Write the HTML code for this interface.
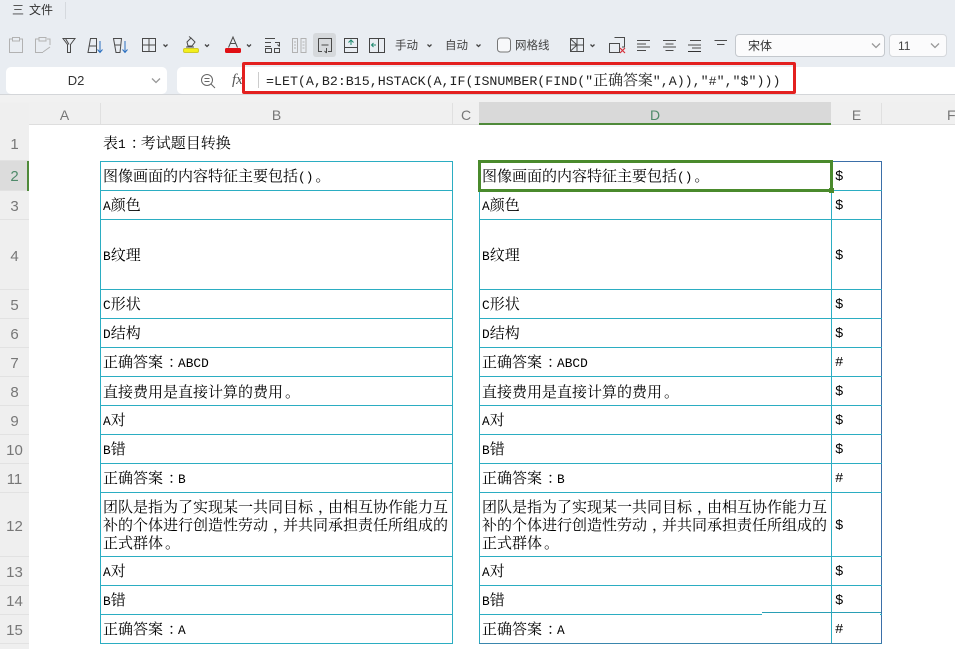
<!DOCTYPE html>
<html>
<head>
<meta charset="utf-8">
<style>
html,body{margin:0;padding:0}
body{width:955px;height:649px;overflow:hidden;position:relative;background:#fff;font-family:"Liberation Sans","Noto Sans CJK SC",sans-serif;color:#333}
.a{position:absolute}
.ui{font-size:11.5px;color:#444;line-height:14px;white-space:nowrap}
.ch,.rh{position:absolute;color:#777;text-align:center;font-size:14px}
.ch{top:103px;height:21px;line-height:24px;border-right:1px solid #e0e0e0;box-sizing:border-box}
.rh{left:0;width:29px;background:#efefef;box-sizing:border-box;border-bottom:1px solid #e2e2e2;font-size:15px}
table{position:absolute;border-collapse:collapse;table-layout:fixed;font-family:"Noto Serif CJK SC","Liberation Serif",serif;font-size:15px;color:#000;line-height:18px}
td{border:1px solid #2badc2;padding:1px 0 0 2px;overflow:hidden;vertical-align:middle;box-sizing:border-box;white-space:nowrap}
i{font-family:"Liberation Mono",monospace;font-style:normal;font-size:12.8px}
b{font-weight:normal;position:relative;left:5px}
u{text-decoration:none;position:relative;left:2px}
td.l{padding-left:2px}
td.e{padding:2px 0 0 3px;border-right:1px solid #3b6fa8;font-family:"Liberation Mono",monospace;font-size:14px}
td.t{padding-top:3px}
tr.top td.e{border-top-color:#3b6fa8}
tr.end td{border-bottom-color:#3a86ad}
svg{position:absolute;overflow:visible}
.s{fill:none;stroke:#4a4a4a;stroke-width:1}
.c{fill:none;stroke:#444;stroke-width:1.3}
.g{fill:none;stroke:#b2b2b2;stroke-width:1}
</style>
</head>
<body>
<div class="a" style="left:0;top:0;width:955px;height:103px;background:#e9edf2"></div>

<div class="a ui" style="left:12px;top:3px;font-size:12px">三</div>
<div class="a ui" style="left:29px;top:3px;font-size:12px;color:#333">文件</div>
<div class="a" style="left:65px;top:2px;width:1px;height:17px;background:#d5d9de"></div>

<div class="a" style="left:313px;top:33px;width:23px;height:24px;background:#d6d9dc;border-radius:3px"></div>

<svg class="a" style="left:0;top:0" width="955" height="62" viewBox="0 0 955 62">
  <path class="g" d="M12 39H9.500V52.500H22.500V39H20M12.500 37.500H19.500V41H12.500Z"/>
  <path class="g" d="M39 39H35.500V52.500H43M47 39H50V45M39 37.500H46V41H39Z"/>
  <path class="g" d="M43 52L50 47"/>
  <path class="s" d="M63 38.500H75L70.500 44.500V52.500H67.500V44.500ZM65.500 38.500L69 44.500"/>
  <path class="s" d="M88 52.500L90.500 38.500H96.500V52.500ZM89.500 46H96.500"/>
  <path d="M100 41V52M97.500 49.500L100 52.500L102.500 49.500" fill="none" stroke="#2a6fc0" stroke-width="1"/>
  <path class="s" d="M113.500 38.500H121.500L120 52.500H116ZM114.500 45H121"/>
  <path d="M125 41V52M122.500 49.500L125 52.500L127.500 49.500" fill="none" stroke="#2a6fc0" stroke-width="1"/>
  <path class="s" d="M142.500 38.500H155.500V51.500H142.500ZM149 38.500V51.500M142.500 45H155.500"/>
  <path class="c" d="M163.500 44.500L165.500 46.500L167.500 44.500"/>
  <path class="s" d="M187 42L191 38L195 42L192 46H188ZM191 38L189 36.500M186 47H194"/>
  <rect x="183.500" y="48.500" width="15" height="4" rx="1.500" fill="#f3ef1c" stroke="#cfca2a" stroke-width="1"/>
  <path class="c" d="M205 44.500L207 46.500L209 44.500"/>
  <path class="s" d="M228.500 47.500L233 37L237.500 47.500M230 43.500H236"/>
  <rect x="225" y="48" width="16" height="5" rx="1.500" fill="#e00f14"/>
  <path class="c" d="M247 44.500L249 46.500L251 44.500"/>
  <path class="s" d="M265 38.500H275M265 42.500H271M265 46.500H271M265.500 48.500H271.500V52.500H265.500ZM274.500 48.500H279.500V52.500H274.500ZM275 42.500H279.500V46.500M277.500 44.500L279.500 46.500"/>
  <path class="g" d="M292.500 38.500H297.500V52.500H292.500ZM301 38.500H306V52.500H301ZM294 42H296M294 45H296M294 48H296M302.500 42H304.500M302.500 45H304.500M302.500 48H304.500"/>
  <path class="s" d="M318.500 38.500H331.500V51.500H328M322 51.500H318.500V38.500M321.500 45H328.500M326.500 48V53M324.500 51L326.500 53"/>
  <path d="M344.500 38.500H357.500V52.500H344.500ZM344.500 47.500H357.500" fill="none" stroke="#444"/>
  <path d="M351 45V40M348.500 42.500L351 40L353.500 42.500" fill="none" stroke="#1f8a70"/>
  <path d="M369.500 38.500H384.500V52.500H369.500ZM378.500 38.500V52.500" fill="none" stroke="#444"/>
  <path d="M376 45H371.500M373.500 43L371.500 45L373.500 47" fill="none" stroke="#1f8a70"/>
  <path class="c" d="M427.500 44.500L429.500 46.500L431.500 44.500"/>
  <path class="c" d="M476.500 44.500L478.500 46.500L480.500 44.500"/>
  <rect x="497.500" y="38" width="13" height="14" rx="3" fill="#f7f8fa" stroke="#777"/>
  <path class="s" d="M570.500 38.500H583.500V51.500H570.500ZM577 38.500V51.500M570.500 45H583.500M570.500 39L577 45M570.500 51L577 45"/>
  <path class="c" d="M590.500 44.500L592.500 46.500L594.500 44.500"/>
  <path class="s" d="M614.500 37.500H624.500V47H622M609.500 43.500H619.500V52.500H609.500Z"/>
  <path d="M620 48L625 53M625 48L620 53" stroke="#d6303a" stroke-width="1.200"/>
  <path class="s" d="M637 40.500H650M637 44H646M637 47H650M637 50.500H646"/>
  <path class="s" d="M663 40.500H676M665.500 44H673.500M663 47H676M665.500 50.500H673.500"/>
  <path class="s" d="M690 40.500H701M688 45H701M692 48H701"/>
  <path d="M688 51.500H701" stroke="#333" fill="none"/>
  <path class="s" d="M714.500 40.500H727M717 44.500H724.500"/>
</svg>

<div class="a ui" style="left:395px;top:39px">手动</div>
<div class="a ui" style="left:445px;top:39px">自动</div>
<div class="a ui" style="left:515px;top:39px">网格线</div>

<div class="a" style="left:735px;top:34px;width:150px;height:23px;background:#fbfbfc;border:1px solid #c4c8cd;border-radius:4px;box-sizing:border-box"></div>
<div class="a ui" style="left:748px;top:39px;font-family:'Noto Sans CJK SC',sans-serif;font-size:12px;color:#333">宋体</div>
<div class="a" style="left:889px;top:34px;width:58px;height:23px;background:#fbfbfc;border:1px solid #d5d8dc;border-radius:4px;box-sizing:border-box"></div>
<div class="a ui" style="left:898px;top:39px;font-size:12px">11</div>

<div class="a" style="left:6px;top:67px;width:161px;height:27px;background:#fff;border-radius:5px"></div>
<div class="a" style="left:6px;top:72px;width:140px;text-align:center;font-size:13px;line-height:17px;color:#333">D2</div>
<div class="a" style="left:177px;top:67px;width:778px;height:27px;background:#fff;border-radius:5px 0 0 5px"></div>
<svg class="a" style="left:0;top:0" width="955" height="100" viewBox="0 0 955 100">
  <path class="c" style="stroke:#999" d="M872 43.500L876 47.500L880 43.500M931 43.500L935 47.500L939 43.500M152 78.500L156 82.500L160 78.500"/>
  <circle cx="207" cy="80" r="5.500" fill="none" stroke="#666"/>
  <path d="M211 84L215 88M204.500 78.500H209.500M204.500 81.500H209.500" fill="none" stroke="#666"/>
  <path d="M258.500 72V88" stroke="#ccc"/>
</svg>
<div class="a" style="left:232px;top:71px;font:italic 15px 'Liberation Serif',serif;color:#555;line-height:18px">fx</div>
<div class="a" style="left:242px;top:62px;width:554px;height:32px;border:3px solid #e3201f;border-radius:2px;box-sizing:border-box"></div>
<div class="a" style="left:266px;top:71px;width:528px;font-family:'Noto Serif CJK SC',serif;font-size:14.9px;line-height:18px;color:#222;white-space:nowrap"><i style="font-size:13.3px">=LET(A,B2:B15,HSTACK(A,IF(ISNUMBER(FIND("</i>正确答案<i style="font-size:13.3px">",A)),"#","$")))</i></div>

<div class="a" style="left:0;top:95px;width:955px;height:8px;background:#f1f1f1"></div>
<div class="a" style="left:0;top:94px;width:955px;height:1px;background:#d4d6d9"></div>

<div class="a" style="left:0;top:102px;width:955px;height:23px;background:#f0f0f0"></div>
<div class="a" style="left:29px;top:124px;width:926px;height:1px;background:#dedede"></div>
<svg class="a" style="left:0;top:0" width="30" height="125" viewBox="0 0 30 125"><path d="M9 118L14 113V118Z" fill="#777"/></svg>
<div class="ch" style="left:29px;width:72px">A</div>
<div class="ch" style="left:101px;width:352px">B</div>
<div class="ch" style="left:453px;width:26px;border-right:0">C</div>
<div class="ch" style="left:479px;width:352px;top:102px;height:21px;line-height:26px;background:#d9d9d9;color:#4f8a6a;border:0">D</div>
<div class="a" style="left:479px;top:123px;width:352px;height:2px;background:#4f8a3a"></div>
<div class="ch" style="left:832px;width:50px">E</div>
<div class="a" style="left:947px;top:103px;font-size:14px;line-height:24px;color:#777">F</div>

<div class="a" style="left:0;top:103px;width:29px;height:546px;background:#efefef"></div>
<div class="rh" style="top:125px;height:36px;line-height:39px">1</div>
<div class="rh" style="top:161px;height:30px;line-height:32px;background:#dcdcdc;color:#4f8a6a">2</div>
<div class="a" style="left:27px;top:161px;width:2px;height:30px;background:#4f8a3a"></div>
<div class="rh" style="top:191px;height:29px;line-height:32px">3</div>
<div class="rh" style="top:220px;height:70px;line-height:73px">4</div>
<div class="rh" style="top:290px;height:29px;line-height:31px">5</div>
<div class="rh" style="top:319px;height:29px;line-height:31px">6</div>
<div class="rh" style="top:348px;height:29px;line-height:31px">7</div>
<div class="rh" style="top:377px;height:29px;line-height:31px">8</div>
<div class="rh" style="top:406px;height:29px;line-height:31px">9</div>
<div class="rh" style="top:435px;height:29px;line-height:31px">10</div>
<div class="rh" style="top:464px;height:29px;line-height:31px">11</div>
<div class="rh" style="top:493px;height:64px;line-height:67px">12</div>
<div class="rh" style="top:557px;height:29px;line-height:31px">13</div>
<div class="rh" style="top:586px;height:29px;line-height:31px">14</div>
<div class="rh" style="top:615px;height:29px;line-height:31px">15</div>

<div class="a" style="left:103px;top:134px;font-family:'Noto Serif CJK SC',serif;font-size:15px;line-height:18px;color:#000;white-space:nowrap">表<i>1</i><b>：</b>考试题目转换</div>

<table style="left:100px;top:161px;width:352px">
<colgroup><col style="width:352px"></colgroup>
<tr style="height:29px"><td>图像画面的内容特征主要包括<i>()</i><u>。</u></td></tr>
<tr style="height:29px"><td class="l"><i>A</i>颜色</td></tr>
<tr style="height:70px"><td class="l t"><i>B</i>纹理</td></tr>
<tr style="height:29px"><td class="l"><i>C</i>形状</td></tr>
<tr style="height:29px"><td class="l"><i>D</i>结构</td></tr>
<tr style="height:29px"><td>正确答案<b>：</b><i>ABCD</i></td></tr>
<tr style="height:29px"><td>直接费用是直接计算的费用<u>。</u></td></tr>
<tr style="height:29px"><td class="l"><i>A</i>对</td></tr>
<tr style="height:29px"><td class="l"><i>B</i>错</td></tr>
<tr style="height:29px"><td>正确答案<b>：</b><i>B</i></td></tr>
<tr style="height:64px"><td>团队是指为了实现某一共同目标<b>，</b>由相互协作能力互<br>补的个体进行创造性劳动<b>，</b>并共同承担责任所组成的<br>正式群体<u>。</u></td></tr>
<tr style="height:29px"><td class="l"><i>A</i>对</td></tr>
<tr style="height:29px"><td class="l"><i>B</i>错</td></tr>
<tr style="height:29px"><td>正确答案<b>：</b><i>A</i></td></tr>
</table>

<table style="left:479px;top:161px;width:402px">
<colgroup><col style="width:352px"><col style="width:50px"></colgroup>
<tr class="top" style="height:29px"><td>图像画面的内容特征主要包括<i>()</i><u>。</u></td><td class="e">$</td></tr>
<tr style="height:29px"><td class="l"><i>A</i>颜色</td><td class="e">$</td></tr>
<tr style="height:70px"><td class="l t"><i>B</i>纹理</td><td class="e">$</td></tr>
<tr style="height:29px"><td class="l"><i>C</i>形状</td><td class="e">$</td></tr>
<tr style="height:29px"><td class="l"><i>D</i>结构</td><td class="e">$</td></tr>
<tr style="height:29px"><td>正确答案<b>：</b><i>ABCD</i></td><td class="e">#</td></tr>
<tr style="height:29px"><td>直接费用是直接计算的费用<u>。</u></td><td class="e">$</td></tr>
<tr style="height:29px"><td class="l"><i>A</i>对</td><td class="e">$</td></tr>
<tr style="height:29px"><td class="l"><i>B</i>错</td><td class="e">$</td></tr>
<tr style="height:29px"><td>正确答案<b>：</b><i>B</i></td><td class="e">#</td></tr>
<tr style="height:64px"><td>团队是指为了实现某一共同目标<b>，</b>由相互协作能力互<br>补的个体进行创造性劳动<b>，</b>并共同承担责任所组成的<br>正式群体<u>。</u></td><td class="e">$</td></tr>
<tr style="height:29px"><td class="l"><i>A</i>对</td><td class="e">$</td></tr>
<tr style="height:29px"><td class="l"><i>B</i>错</td><td class="e">$</td></tr>
<tr class="end" style="height:29px"><td>正确答案<b>：</b><i>A</i></td><td class="e">#</td></tr>
</table>

<div class="a" style="left:762px;top:613px;width:118px;height:3px;background:#fff"></div>
<div class="a" style="left:762px;top:612px;width:119px;height:1px;background:#2a9fb5"></div>
<div class="a" style="left:831px;top:612px;width:1px;height:5px;background:#2aa7ba"></div>

<div class="a" style="left:478px;top:160px;width:355px;height:32px;border:3px solid #4a8a2c;box-sizing:border-box"></div>
<div class="a" style="left:829px;top:188px;width:5px;height:5px;background:#4a8a2c"></div>
</body>
</html>
